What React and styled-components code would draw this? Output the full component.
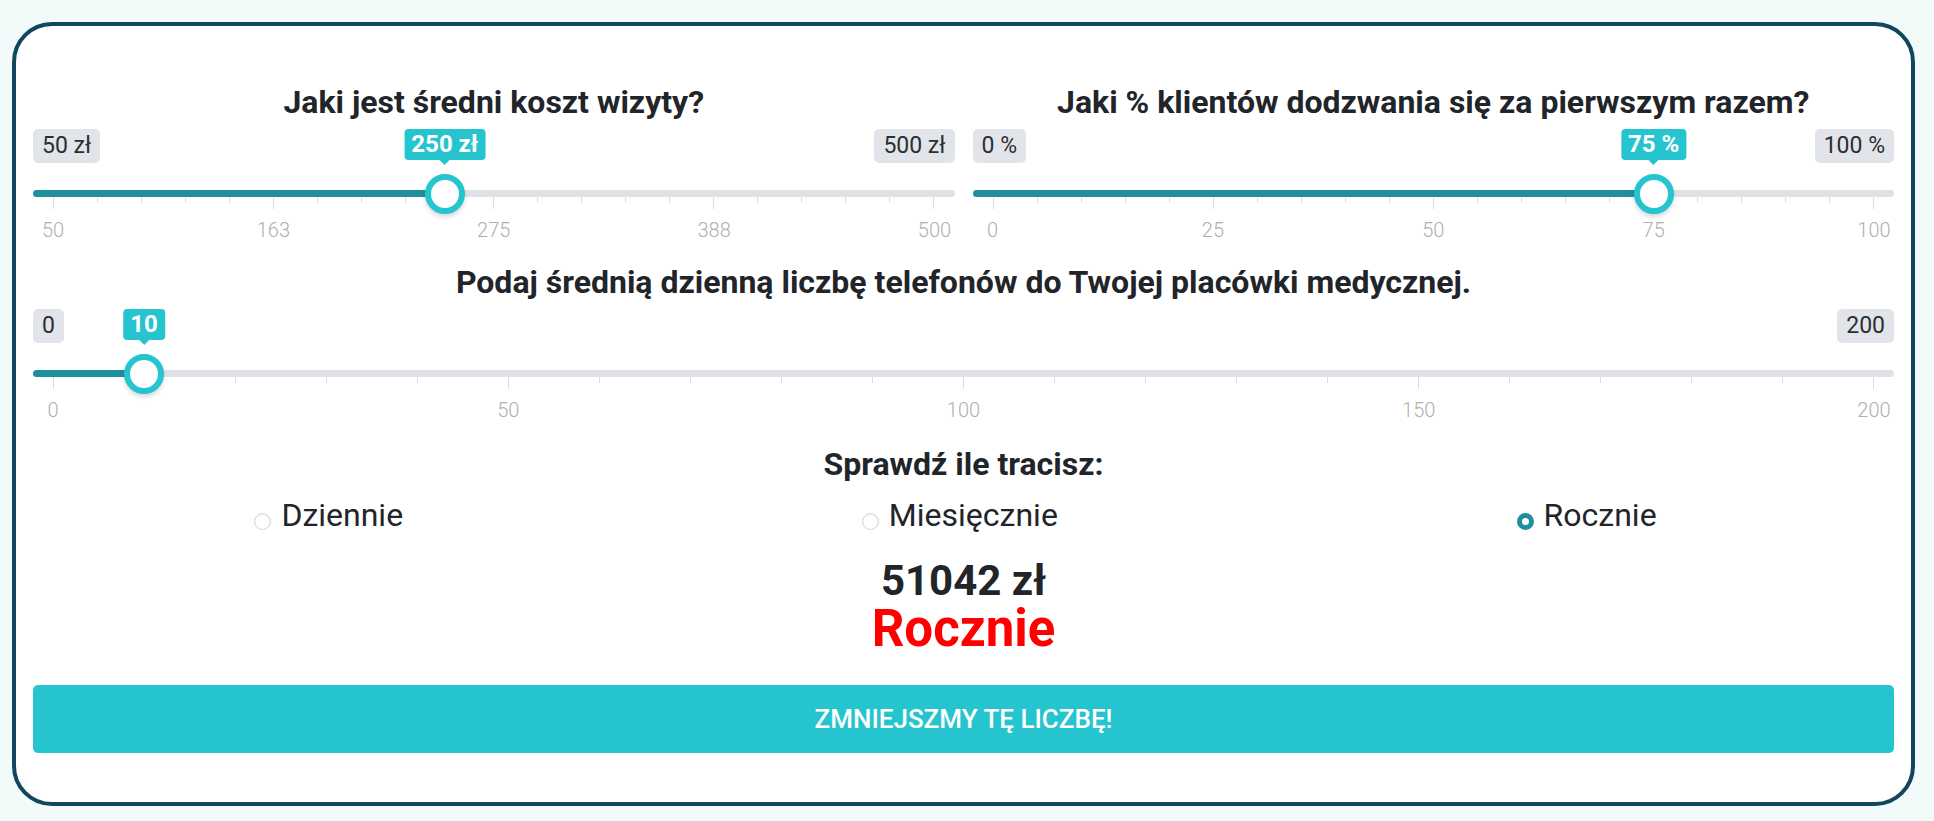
import React from 'react';
import styled, { createGlobalStyle } from 'styled-components';

const HANDLE = 40;

const GlobalStyle = createGlobalStyle`
  body {
    margin: 0;
    background: #f3fbfa;
    font-family: Roboto, "Liberation Sans", Arial, sans-serif;
    color: #212529;
  }
`;

const Card = styled.div`
  margin: 22px 19px 15px 12px;
  background: #fff;
  border: 4px solid #11465e;
  border-radius: 40px;
  padding: 58px 17px 49px;
`;

const TopRow = styled.div`
  display: grid;
  grid-template-columns: 1fr 1fr;
  column-gap: 18px;
`;

const Section = styled.div`
  margin-top: ${(p) => p.$top || 0}px;
`;

const Title = styled.h3`
  margin: 0 0 9px;
  font-size: 32px;
  line-height: 36px;
  font-weight: 700;
  text-align: center;
  color: #212529;
`;

const Lead = styled(Title)`
  margin: 24px 0 0;
`;

const LimitsRow = styled.div`
  position: relative;
  display: flex;
  justify-content: space-between;
  height: 34px;
`;

const Limit = styled.span`
  background: #e1e4e9;
  border-radius: 5px;
  padding: 0 9px;
  font-size: 23px;
  line-height: 34px;
  color: #2b2f33;
`;

const Bubble = styled.span`
  position: absolute;
  top: 0;
  transform: translateX(-50%);
  background: #26c4cf;
  color: #fff;
  font-weight: 700;
  font-size: 24px;
  line-height: 31px;
  padding: 0 7px;
  border-radius: 4px;
  white-space: nowrap;

  &::after {
    content: '';
    position: absolute;
    left: 50%;
    top: 100%;
    margin-left: -5px;
    border: 5px solid transparent;
    border-top-color: #26c4cf;
  }
`;

const Track = styled.div`
  position: relative;
  margin-top: 27px;
  height: 7px;
  border-radius: 4px;
  background: #dee1e6;
`;

const Bar = styled.div`
  height: 100%;
  border-radius: 4px 0 0 4px;
  background: #1f8f9e;
`;

const Handle = styled.span`
  position: absolute;
  top: 50%;
  width: ${HANDLE}px;
  height: ${HANDLE}px;
  margin-top: -${HANDLE / 2}px;
  box-sizing: border-box;
  border: 6px solid #26c4cf;
  border-radius: 50%;
  background: #fff;
  box-shadow: 0 3px 4px rgba(0, 0, 0, 0.15);
`;

const Ticks = styled.div`
  display: flex;
  justify-content: space-between;
  align-items: flex-start;
  padding: 0 ${HANDLE / 2}px;
  height: 12px;
`;

const Tick = styled.span`
  width: 1px;
  height: ${(p) => (p.$major ? 12 : 6)}px;
  background: #dcdcdc;
`;

const Scale = styled.div`
  display: flex;
  justify-content: space-between;
  padding: 0 ${HANDLE / 2}px;
  margin-top: 9px;
`;

const ScaleNum = styled.span`
  width: 0;
  display: flex;
  justify-content: center;
  font-size: 20px;
  line-height: 24px;
  font-weight: 300;
  color: #afafaf;
`;

const Options = styled.div`
  display: flex;
  justify-content: space-around;
  margin-top: 15px;
`;

const Option = styled.label`
  display: flex;
  align-items: center;
  margin-right: 16px;
  font-size: 32px;
  line-height: 36px;
  color: #212529;
`;

const Radio = styled.span`
  width: 17px;
  height: 17px;
  box-sizing: border-box;
  border-radius: 50%;
  margin: 12px 10px 0 0;
  background: #fff;
  border: ${(p) => (p.$checked ? '5px solid #1f8f9e' : '1px solid #cfd4d9')};
  box-shadow: ${(p) => (p.$checked ? 'none' : 'inset 0 1px 2px rgba(0,0,0,0.08)')};
`;

const Amount = styled.div`
  margin-top: 27px;
  text-align: center;
  font-size: 42px;
  line-height: 42px;
  font-weight: 700;
  color: #212529;
`;

const Period = styled.div`
  margin-top: 2px;
  text-align: center;
  font-size: 51px;
  line-height: 50px;
  font-weight: 700;
  color: #ff0000;
`;

const Cta = styled.button`
  display: block;
  width: 100%;
  height: 68px;
  margin-top: 31px;
  border: 0;
  border-radius: 5px;
  background: #26c4cf;
  color: #fff;
  font-family: inherit;
  font-size: 26px;
  font-weight: 500;
  text-transform: uppercase;
  cursor: pointer;
`;

const Slider = ({ min, max, value, unit, grid }) => {
  const p = (value - min) / (max - min);
  const pos = `calc(${p} * (100% - ${HANDLE}px) + ${HANDLE / 2}px)`;
  const suffix = unit ? ` ${unit}` : '';
  const ticks = Array.from({ length: 21 }, (_, i) => i);

  return (
    <div>
      <LimitsRow>
        <Limit>{min}{suffix}</Limit>
        <Limit>{max}{suffix}</Limit>
        <Bubble style={{ left: pos }}>{value}{suffix}</Bubble>
      </LimitsRow>
      <Track>
        <Bar style={{ width: pos }} />
        <Handle style={{ left: `calc(${p} * (100% - ${HANDLE}px))` }} />
      </Track>
      <Ticks>
        {ticks.map((i) => (
          <Tick key={i} $major={i % 5 === 0} />
        ))}
      </Ticks>
      <Scale>
        {grid.map((g) => (
          <ScaleNum key={g}>{g}</ScaleNum>
        ))}
      </Scale>
    </div>
  );
};

const periods = ['Dziennie', 'Miesięcznie', 'Rocznie'];

export default function App() {
  const selected = 'Rocznie';

  return (
    <>
      <GlobalStyle />
      <Card>
        <TopRow>
          <Section>
            <Title>Jaki jest średni koszt wizyty?</Title>
            <Slider min={50} max={500} value={250} unit="zł" grid={[50, 163, 275, 388, 500]} />
          </Section>
          <Section>
            <Title>Jaki % klientów dodzwania się za pierwszym razem?</Title>
            <Slider min={0} max={100} value={75} unit="%" grid={[0, 25, 50, 75, 100]} />
          </Section>
        </TopRow>

        <Section $top={22}>
          <Title>Podaj średnią dzienną liczbę telefonów do Twojej placówki medycznej.</Title>
          <Slider min={0} max={200} value={10} grid={[0, 50, 100, 150, 200]} />
        </Section>

        <Lead as="h4">Sprawdź ile tracisz:</Lead>

        <Options>
          {periods.map((name) => (
            <Option key={name}>
              <Radio $checked={name === selected} />
              {name}
            </Option>
          ))}
        </Options>

        <Amount>51042 zł</Amount>
        <Period>{selected}</Period>

        <Cta>Zmniejszmy tę liczbę!</Cta>
      </Card>
    </>
  );
}
